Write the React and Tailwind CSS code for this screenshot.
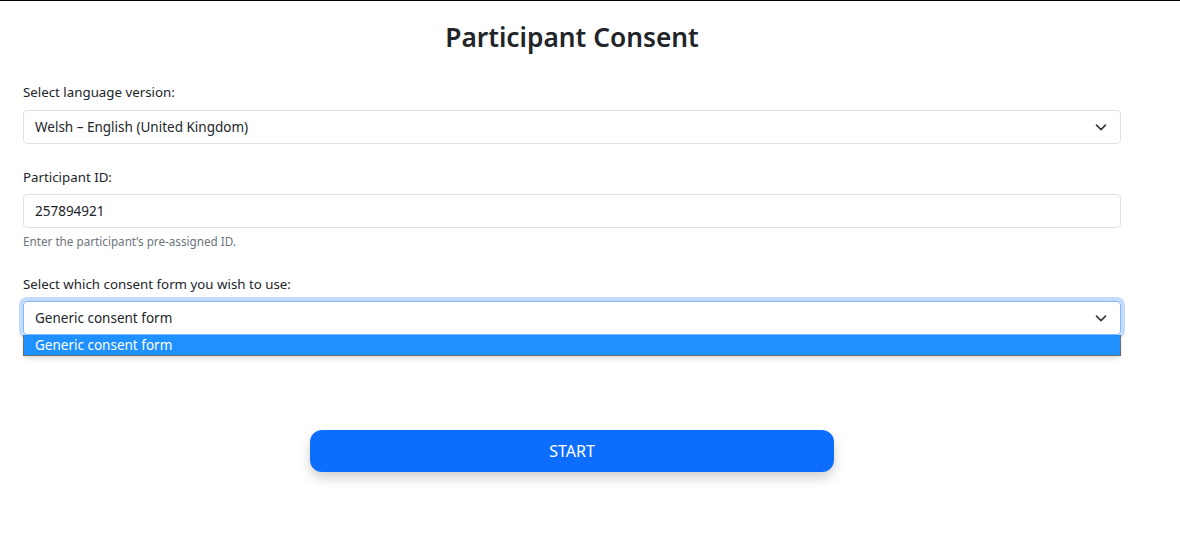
import React from 'react';

const Chevron = () => (
  <svg className="w-[12px] h-[12px] text-[#343a40]" fill="none" stroke="currentColor" viewBox="0 0 16 16">
    <path strokeLinecap="round" strokeLinejoin="round" strokeWidth={2.2} d="M2 5.5l6 6 6-6" />
  </svg>
);

const App = () => {
  return (
    <div className="min-h-[546px] bg-white border-t border-black text-[#212529]" style={{ fontFamily: '"Noto Sans", "Open Sans", sans-serif' }}>
      <div className="ml-[23px] w-[1098px]">
        <h1 className="text-center text-[26.3px] font-semibold pt-[17px] leading-[38px]">Participant Consent</h1>

        <div className="mt-[26px]">
          <label className="block text-[13.3px] leading-[20px] mb-[8px]">Select language version:</label>
          <div className="h-[34px] border border-[#dee2e6] rounded-[4px] flex items-center justify-between pl-[11px] pr-[13px] text-[13.5px]">
            <span>Welsh – English (United Kingdom)</span>
            <Chevron />
          </div>
        </div>

        <div className="mt-[23px]">
          <label className="block text-[13.3px] leading-[20px] mb-[7px]">Participant ID:</label>
          <div className="h-[34px] border border-[#dee2e6] rounded-[4px] flex items-center pl-[11px] text-[13.5px]">
            257894921
          </div>
          <p className="text-[11.7px] text-[#6c757d] mt-[5px] leading-[16px]">Enter the participant’s pre-assigned ID.</p>
        </div>

        <div className="mt-[25px] relative">
          <label className="block text-[13.3px] leading-[20px] mb-[7px]">Select which consent form you wish to use:</label>
          <div className="h-[34px] border border-[#86b7fe] rounded-[4px] flex items-center justify-between pl-[11px] pr-[13px] text-[13.5px] ring-4 ring-[#0d6efd]/25">
            <span>Generic consent form</span>
            <Chevron />
          </div>
          <div className="absolute left-0 right-0 top-full h-[21px] bg-[#1e90ff] text-white text-[13.5px] pl-[11px] leading-[21px] border border-[#6b6b6b] border-t-0 shadow-md">
            Generic consent form
          </div>
        </div>

        <div className="flex justify-center mt-[95px]">
          <button className="w-[524px] h-[42px] bg-[#0d6efd] text-white text-[16px] rounded-xl shadow-[0_6px_12px_rgba(0,0,0,0.18)]">
            START
          </button>
        </div>
      </div>
    </div>
  );
};

export default App;
